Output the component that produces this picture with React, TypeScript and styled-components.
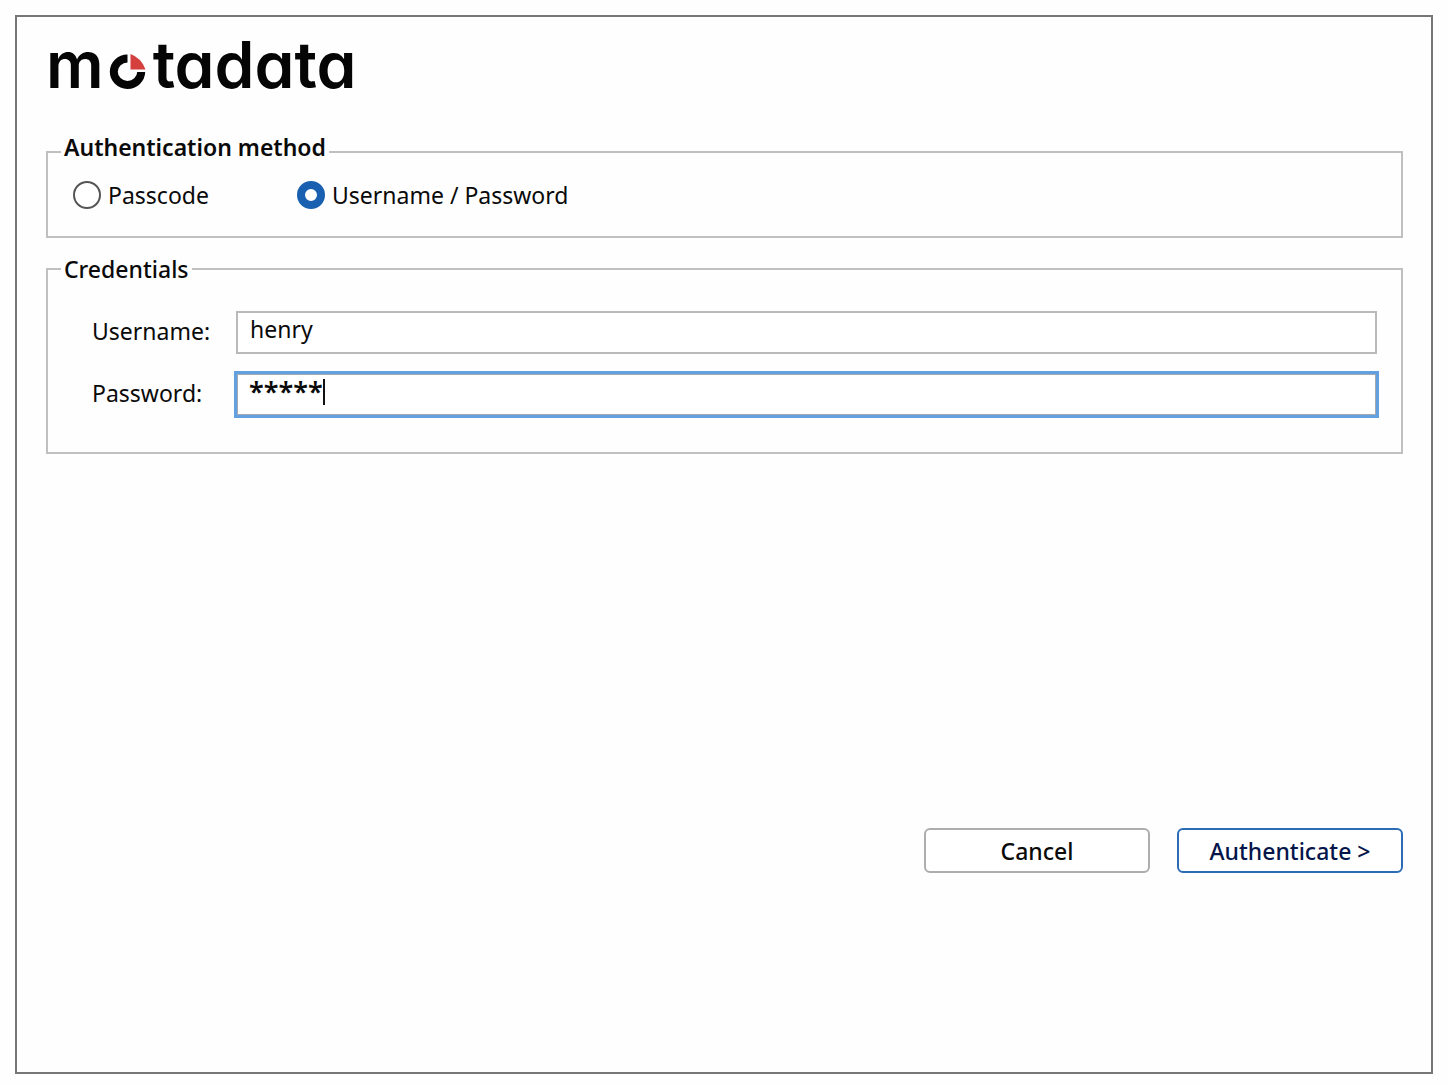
import React, { useState } from "react";
import styled, { createGlobalStyle } from "styled-components";

const GlobalStyle = createGlobalStyle`
  *, *::before, *::after { box-sizing: border-box; }
  body {
    margin: 0;
    background: #fefefe;
    color: #0a0a0a;
    font-family: "Noto Sans", "Open Sans", sans-serif;
    font-size: 23px;
    line-height: 28px;
  }
`;

const Page = styled.div`
  display: flex;
  min-height: 100vh;
  padding: 15px 15px 12px;
`;

const Dialog = styled.form`
  display: flex;
  flex: 1;
  flex-direction: column;
  padding: 18px 28px 199px 29px;
  border: 2px solid #777777;
`;

const Brand = styled.h1`
  display: flex;
  align-items: baseline;
  margin: 0 0 38px;
  color: #050505;
  font-family: "Inter", sans-serif;
  font-size: 64px;
  font-weight: 600;
  line-height: 60px;
  font-feature-settings: "cv11" 1;
`;

const BrandMark = styled.svg`
  width: 38px;
  height: 34px;
  margin: 0 6px 0 5px;
  overflow: visible;
`;

const Group = styled.fieldset`
  min-width: 0;
  margin: 0 0 17px;
  padding: 0;
  border: 2px solid #c0c0c0;
`;

const Legend = styled.legend<{ $bold?: boolean }>`
  margin-left: 13px;
  padding: 0 3px ${(p) => (p.$bold ? 10 : 0)}px;
  font-weight: ${(p) => (p.$bold ? 600 : 500)};
`;

const Options = styled.div`
  display: grid;
  grid-template-columns: 224px 1fr;
  padding: 10px 25px 27px;
`;

const Option = styled.label`
  display: flex;
  align-items: center;
  gap: 7px;
`;

const Radio = styled.input`
  appearance: none;
  width: 28px;
  height: 28px;
  margin: 0;
  border: 2px solid #555555;
  border-radius: 50%;
  background: #ffffff;

  &:checked {
    border: 8px solid #1961b0;
  }
`;

const Fields = styled.div`
  display: grid;
  grid-template-columns: 144px 1fr;
  row-gap: 19px;
  padding: 28px 24px 36px 44px;
`;

const FieldLabel = styled.label`
  padding-top: 6px;
`;

const Field = styled.div<{ $active?: boolean }>`
  display: flex;
  align-items: center;
  height: 43px;
  padding: 0 12px 6px;
  border: ${(p) => (p.$active ? "1px solid #62a0e0" : "2px solid #bababa")};
  background: #ffffff;
  box-shadow: ${(p) => (p.$active ? "0 0 0 2px #62a0e0, inset 0 0 0 1px #a3a9b0" : "none")};
`;

const TextBox = styled.input<{ $masked?: boolean }>`
  flex: ${(p) => (p.$masked ? "0 1 auto" : "1")};
  field-sizing: ${(p) => (p.$masked ? "content" : "fixed")};
  min-width: 0;
  height: 33px;
  padding: 0;
  border: 0;
  outline: 0;
  background: transparent;
  color: inherit;
  font: inherit;
  font-size: ${(p) => (p.$masked ? 27 : 23)}px;
  font-weight: ${(p) => (p.$masked ? 600 : 400)};
  line-height: 33px;
  caret-color: ${(p) => (p.$masked ? "transparent" : "auto")};
`;

const Caret = styled.span`
  width: 2px;
  height: 26px;
  background: #111111;
`;

const Actions = styled.div`
  display: flex;
  justify-content: flex-end;
  gap: 27px;
  margin-top: auto;
`;

const Button = styled.button<{ $primary?: boolean }>`
  width: 226px;
  height: 45px;
  padding: 0;
  border: 2px solid ${(p) => (p.$primary ? "#2c6cb4" : "#adadad")};
  border-radius: 6px;
  background: #ffffff;
  color: ${(p) => (p.$primary ? "#04154a" : "#0a0a0a")};
  font: inherit;
  font-weight: 500;
`;

function Logo() {
  return (
    <Brand>
      m
      <BrandMark viewBox="0 0 37 34" role="img" aria-label="o">
        <path d="M18 4.5A13.7 13.2 0 1 0 31.7 18" fill="none" stroke="#050505" strokeWidth="8" />
        <path d="M21 0Q32 4 36 15.5H21Z" fill="#d3403d" />
      </BrandMark>
      tadata
    </Brand>
  );
}

export default function App() {
  const [method, setMethod] = useState("password");
  const [username, setUsername] = useState("henry");
  const [secret, setSecret] = useState("*****");

  return (
    <>
      <GlobalStyle />
      <Page>
        <Dialog onSubmit={(e) => e.preventDefault()}>
          <Logo />
          <Group>
            <Legend $bold>Authentication method</Legend>
            <Options>
              <Option>
                <Radio type="radio" name="method" checked={method === "passcode"} onChange={() => setMethod("passcode")} />
                Passcode
              </Option>
              <Option>
                <Radio type="radio" name="method" checked={method === "password"} onChange={() => setMethod("password")} />
                Username / Password
              </Option>
            </Options>
          </Group>
          <Group>
            <Legend>Credentials</Legend>
            <Fields>
              <FieldLabel htmlFor="username">Username:</FieldLabel>
              <Field>
                <TextBox id="username" value={username} onChange={(e) => setUsername(e.target.value)} />
              </Field>
              <FieldLabel htmlFor="password">Password:</FieldLabel>
              <Field $active>
                <TextBox
                  id="password"
                  $masked
                  autoComplete="off"
                  value={secret}
                  onChange={(e) => setSecret("*".repeat(e.target.value.length))}
                />
                <Caret />
              </Field>
            </Fields>
          </Group>
          <Actions>
            <Button type="button">Cancel</Button>
            <Button type="submit" $primary>Authenticate &gt;</Button>
          </Actions>
        </Dialog>
      </Page>
    </>
  );
}
